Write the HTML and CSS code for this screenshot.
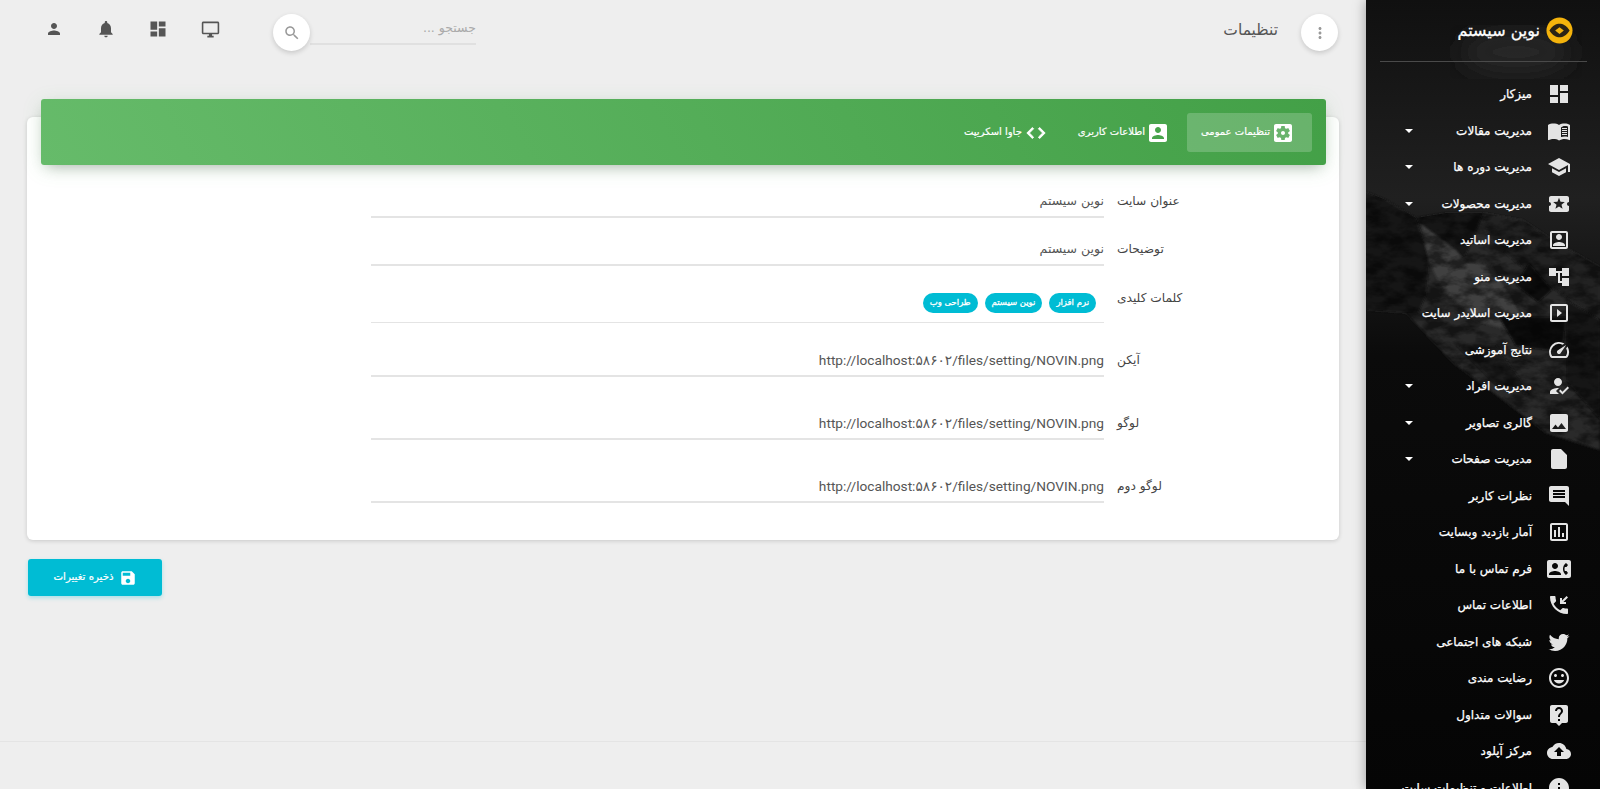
FILE: index.html
```html
<!DOCTYPE html>
<html lang="fa" dir="rtl">
<head>
    <meta charset="UTF-8">
    <meta name="viewport" content="width=device-width, initial-scale=1.0">
    <title>تنظیمات</title>
    <link rel="stylesheet" href="styles.css">
</head>
<body>
    <svg class="sprite" xmlns="http://www.w3.org/2000/svg">
        <symbol id="i-dashboard" viewBox="0 0 24 24"><path d="M3 13h8V3H3v10zm0 8h8v-6H3v6zm10 0h8V11h-8v10zm0-18v6h8V3h-8z"/></symbol>
        <symbol id="i-book" viewBox="0 0 24 24"><path d="M1 6c1.45-1.1 3.55-1.5 5.5-1.5S10.55 4.900 12 6v15.500c-1.450-1.100-3.550-1.500-5.500-1.500-1.450 0-3.400.45-4.750 1.100-.1 0-.15.05-.25.05-.25 0-.5-.25-.5-.5V6z"/><path d="M12 6c1.450-1.100 3.550-1.500 5.500-1.500 1.170 0 2.390.15 3.500.5.750.25 1.400.55 2 1v14.650c0 .25-.25.5-.5.5-.1 0-.15 0-.25-.05-1.400-.750-3.100-1.050-4.750-1.050-1.700 0-4.150.65-5.500 1.500V6zm2 2.500v9.600c1.100-.4 2.400-.6 3.500-.6 1.200 0 2.400.15 3.500.5V7.400c-1.100-.35-2.300-.5-3.500-.5-1.200 0-2.400.6-3.500 1.600z" fill-rule="evenodd"/><path d="M15 9h5v1h-5zM15 11h5v1h-5zM15 13h5v1h-5zM15 15h5v1h-5z"/></symbol>
        <symbol id="i-school" viewBox="0 0 24 24"><path d="M5 13.180v4L12 21l7-3.820v-4L12 17l-7-3.820zM12 3L1 9l11 6 9-4.910V17h2V9L12 3z"/></symbol>
        <symbol id="i-ticket" viewBox="0 0 24 24"><path d="M20 12c0-1.100.9-2 2-2V6c0-1.100-.9-2-2-2H4c-1.100 0-1.990.9-1.990 2v4c1.100 0 1.990.9 1.990 2s-.89 2-2 2v4c0 1.100.9 2 2 2h16c1.100 0 2-.9 2-2v-4c-1.100 0-2-.9-2-2zm-4.420 4.800L12 14.500l-3.580 2.300 1.080-4.120-3.290-2.690 4.240-.25L12 5.800l1.540 3.950 4.240.25-3.290 2.690 1.090 4.110z"/></symbol>
        <symbol id="i-portrait" viewBox="0 0 24 24"><path d="M3 5v14c0 1.100.89 2 2 2h14c1.100 0 2-.9 2-2V5c0-1.100-.9-2-2-2H5c-1.110 0-2 .9-2 2zm16 14H5V5h14v14zM12 12c1.650 0 3-1.350 3-3s-1.350-3-3-3-3 1.350-3 3 1.350 3 3 3zM6 17v1h12v-1c0-2-4-3.100-6-3.100S6 15 6 17z"/></symbol>
        <symbol id="i-tree" viewBox="0 0 24 24"><path d="M22 11V3h-7v3H9V3H2v8h7V8h2v10h4v3h7v-8h-7v3h-2V8h2v3z"/></symbol>
        <symbol id="i-slides" viewBox="0 0 24 24"><path d="M10 8v8l5-4-5-4zm9-5H5c-1.100 0-2 .9-2 2v14c0 1.100.9 2 2 2h14c1.100 0 2-.9 2-2V5c0-1.100-.9-2-2-2zm0 16H5V5h14v14z"/></symbol>
        <symbol id="i-speed" viewBox="0 0 24 24"><path d="M20.380 8.570l-1.230 1.850a8 8 0 0 1-.22 7.580H5.070A8 8 0 0 1 15.580 6.850l1.850-1.230A10 10 0 0 0 3.350 19a2 2 0 0 0 1.720 1h13.850a2 2 0 0 0 1.740-1 10 10 0 0 0-.27-10.440zm-9.790 6.840a2 2 0 0 0 2.830 0l5.660-8.490-8.490 5.660a2 2 0 0 0 0 2.830z"/></symbol>
        <symbol id="i-reg" viewBox="0 0 24 24"><path d="M9 17l3-2.940c-.39-.04-.68-.06-1-.06-2.670 0-8 1.340-8 4v2h9l-3-3zm2-5c2.210 0 4-1.790 4-4s-1.790-4-4-4-4 1.790-4 4 1.790 4 4 4"/><path d="M15.470 20.500L12 17l1.400-1.410 2.070 2.080 5.130-5.170 1.400 1.410z"/></symbol>
        <symbol id="i-image" viewBox="0 0 24 24"><path d="M21 19V5c0-1.100-.9-2-2-2H5c-1.100 0-2 .9-2 2v14c0 1.100.9 2 2 2h14c1.100 0 2-.9 2-2zM8.500 13.500l2.500 3.010L14.500 12l4.500 6H5l3.500-4.500z"/></symbol>
        <symbol id="i-file" viewBox="0 0 24 24"><path d="M6 2c-1.100 0-1.990.9-1.990 2L4 20c0 1.100.89 2 1.990 2H18c1.100 0 2-.9 2-2V8l-6-6H6z"/></symbol>
        <symbol id="i-message" viewBox="0 0 24 24"><path d="M20 2H4c-1.100 0-1.990.9-1.990 2L2 22l4-4h14c1.100 0 2-.9 2-2V4c0-1.100-.9-2-2-2zm-2 12H6v-2h12v2zm0-3H6V9h12v2zm0-3H6V6h12v2z"/></symbol>
        <symbol id="i-chart" viewBox="0 0 24 24"><path d="M9 17H7v-7h2v7zm4 0h-2V7h2v10zm4 0h-2v-4h2v4zm2 2H5V5h14v14zM19 3H5c-1.100 0-2 .9-2 2v14c0 1.100.9 2 2 2h14c1.100 0 2-.9 2-2V5c0-1.100-.9-2-2-2z"/></symbol>
        <symbol id="i-contact" viewBox="0 0 24 24"><path d="M22 3H2C.9 3 0 3.900 0 5v14c0 1.100.9 2 2 2h20c1.100 0 1.990-.9 1.990-2L24 5c0-1.100-.9-2-2-2zM8 6c1.660 0 3 1.340 3 3s-1.340 3-3 3-3-1.340-3-3 1.340-3 3-3zm6 12H2v-1c0-2 4-3.100 6-3.100s6 1.100 6 3.100v1zm3.850-4h1.640L21 16l-1.990 1.990c-1.310-.98-2.280-2.380-2.730-3.990-.18-.64-.28-1.310-.28-2s.1-1.360.28-2c.45-1.620 1.420-3.010 2.730-3.990L21 8l-1.510 2h-1.640c-.22.63-.35 1.300-.35 2s.13 1.370.35 2z"/></symbol>
        <symbol id="i-callback" viewBox="0 0 24 24"><path d="M20 15.500c-1.250 0-2.450-.2-3.570-.57-.35-.11-.74-.03-1.020.24l-2.200 2.200c-2.830-1.440-5.150-3.750-6.590-6.590l2.200-2.210c.28-.26.36-.65.25-1C8.700 6.450 8.500 5.250 8.500 4c0-.55-.45-1-1-1H4c-.55 0-1 .45-1 1 0 9.390 7.610 17 17 17 .55 0 1-.45 1-1v-3.500c0-.55-.45-1-1-1zM21 4.410L19.590 3 15 7.590V5h-2v6h6V9h-2.590z"/></symbol>
        <symbol id="i-twitter" viewBox="0 0 24 24"><path d="M22.460 6c-.77.35-1.600.58-2.460.69.88-.53 1.560-1.370 1.880-2.380-.83.5-1.750.85-2.720 1.050C18.370 4.500 17.260 4 16 4c-2.350 0-4.270 1.920-4.270 4.290 0 .34.04.67.11.98C8.280 9.090 5.110 7.380 3 4.790c-.37.63-.58 1.370-.58 2.150 0 1.490.75 2.810 1.910 3.560-.71 0-1.370-.2-1.950-.5v.03c0 2.080 1.480 3.820 3.440 4.210a4.220 4.220 0 0 1-1.930.07 4.280 4.280 0 0 0 4 2.980 8.521 8.521 0 0 1-5.330 1.840c-.34 0-.68-.02-1.020-.06C3.440 20.290 5.700 21 8.120 21 16 21 20.330 14.460 20.330 8.790c0-.19 0-.37-.01-.56.84-.6 1.560-1.360 2.140-2.230z"/></symbol>
        <symbol id="i-mood" viewBox="0 0 24 24"><path d="M11.990 2C6.470 2 2 6.480 2 12s4.470 10 9.990 10C17.520 22 22 17.520 22 12S17.520 2 11.990 2zM12 20c-4.420 0-8-3.580-8-8s3.580-8 8-8 8 3.580 8 8-3.580 8-8 8zm3.500-9c.83 0 1.500-.67 1.500-1.500S16.330 8 15.500 8 14 8.670 14 9.500s.67 1.500 1.500 1.500zm-7 0c.83 0 1.500-.67 1.500-1.500S9.330 8 8.500 8 7 8.670 7 9.500 7.670 11 8.500 11zm3.500 6.500c2.330 0 4.310-1.460 5.110-3.500H6.890c.8 2.040 2.780 3.500 5.110 3.500z"/></symbol>
        <symbol id="i-help" viewBox="0 0 24 24"><path d="M19 2H5c-1.110 0-2 .9-2 2v14c0 1.100.89 2 2 2h4l3 3 3-3h4c1.100 0 2-.9 2-2V4c0-1.100-.9-2-2-2zm-6 16h-2v-2h2v2zm2.070-7.750l-.9.92C13.450 11.900 13 12.500 13 14h-2v-.5c0-1.100.45-2.100 1.170-2.830l1.240-1.260c.37-.36.59-.86.59-1.410 0-1.100-.9-2-2-2s-2 .9-2 2H8c0-2.210 1.790-4 4-4s4 1.790 4 4c0 .88-.36 1.680-.93 2.250z"/></symbol>
        <symbol id="i-upload" viewBox="0 0 24 24"><path d="M19.350 10.040C18.670 6.590 15.640 4 12 4 9.110 4 6.600 5.640 5.350 8.040 2.340 8.360 0 10.910 0 14c0 3.310 2.690 6 6 6h13c2.760 0 5-2.240 5-5 0-2.640-2.050-4.780-4.650-4.960zM14 13v4h-4v-4H7l5-5 5 5h-3z"/></symbol>
        <symbol id="i-info" viewBox="0 0 24 24"><path d="M12 2C6.480 2 2 6.480 2 12s4.480 10 10 10 10-4.480 10-10S17.520 2 12 2zm1 15h-2v-6h2v6zm0-8h-2V7h2v2z"/></symbol>
        <symbol id="i-person" viewBox="0 0 24 24"><path d="M12 12c2.210 0 4-1.790 4-4s-1.790-4-4-4-4 1.790-4 4 1.790 4 4 4zm0 2c-2.670 0-8 1.340-8 4v2h16v-2c0-2.660-5.330-4-8-4z"/></symbol>
        <symbol id="i-bell" viewBox="0 0 24 24"><path d="M12 22c1.100 0 2-.9 2-2h-4c0 1.100.89 2 2 2zm6-6v-5c0-3.070-1.640-5.640-4.500-6.320V4c0-.83-.67-1.500-1.500-1.500s-1.500.67-1.500 1.500v.68C7.630 5.360 6 7.920 6 11v5l-2 2v1h16v-1l-2-2z"/></symbol>
        <symbol id="i-desktop" viewBox="0 0 24 24"><path d="M21 2H3c-1.100 0-2 .9-2 2v12c0 1.100.9 2 2 2h7v2H8v2h8v-2h-2v-2h7c1.100 0 2-.9 2-2V4c0-1.100-.9-2-2-2zm0 14H3V4h18v12z"/></symbol>
        <symbol id="i-search" viewBox="0 0 24 24"><path d="M15.500 14h-.79l-.28-.27C15.410 12.590 16 11.110 16 9.500 16 5.910 13.090 3 9.500 3S3 5.910 3 9.500 5.910 16 9.500 16c1.610 0 3.090-.59 4.230-1.570l.27.28v.79l5 4.990L20.490 19l-4.990-5zm-6 0C7.010 14 5 11.990 5 9.500S7.010 5 9.500 5 14 7.010 14 9.500 11.990 14 9.500 14z"/></symbol>
        <symbol id="i-more" viewBox="0 0 24 24"><path d="M12 8c1.100 0 2-.9 2-2s-.9-2-2-2-2 .9-2 2 .9 2 2 2zm0 2c-1.100 0-2 .9-2 2s.9 2 2 2 2-.9 2-2-.9-2-2-2zm0 6c-1.100 0-2 .9-2 2s.9 2 2 2 2-.9 2-2-.9-2-2-2z"/></symbol>
        <symbol id="i-settings" viewBox="0 0 24 24"><path d="M12 10c-1.100 0-2 .9-2 2s.9 2 2 2 2-.9 2-2-.9-2-2-2zm7-7H5c-1.110 0-2 .9-2 2v14c0 1.100.89 2 2 2h14c1.110 0 2-.9 2-2V5c0-1.100-.89-2-2-2zm-1.750 9c0 .23-.02.46-.05.68l1.480 1.160c.13.11.17.3.08.45l-1.400 2.420c-.09.15-.27.21-.43.15l-1.740-.7c-.36.28-.76.51-1.180.69l-.26 1.850c-.03.17-.18.3-.35.3h-2.800c-.17 0-.32-.13-.35-.29l-.26-1.850c-.43-.18-.82-.41-1.180-.69l-1.740.7c-.16.06-.34 0-.43-.15l-1.400-2.420c-.09-.15-.05-.34.08-.45l1.480-1.160c-.03-.23-.05-.46-.05-.69 0-.23.02-.46.05-.68l-1.480-1.160c-.13-.11-.17-.3-.08-.45l1.400-2.420c.09-.15.27-.21.43-.15l1.740.7c.36-.28.76-.51 1.180-.69l.26-1.850c.03-.17.18-.3.35-.3h2.800c.17 0 .32.13.35.29l.26 1.850c.43.18.82.41 1.180.69l1.740-.7c.16-.06.34 0 .43.15l1.400 2.420c.09.15.05.34-.08.45l-1.480 1.160c.03.23.05.46.05.69z"/></symbol>
        <symbol id="i-account" viewBox="0 0 24 24"><path d="M3 5v14c0 1.100.89 2 2 2h14c1.100 0 2-.9 2-2V5c0-1.100-.9-2-2-2H5c-1.110 0-2 .9-2 2zm12 4c0 1.660-1.340 3-3 3s-3-1.340-3-3 1.340-3 3-3 3 1.340 3 3zm-9 8c0-2 4-3.100 6-3.100s6 1.100 6 3.100v1H6v-1z"/></symbol>
        <symbol id="i-code" viewBox="0 0 24 24"><path d="M9.400 16.600L4.800 12l4.600-4.600L8 6l-6 6 6 6 1.400-1.400zm5.200 0l4.600-4.600-4.600-4.600L16 6l6 6-6 6-1.400-1.400z"/></symbol>
        <symbol id="i-save" viewBox="0 0 24 24"><path d="M17 3H5c-1.110 0-2 .9-2 2v14c0 1.100.89 2 2 2h14c1.100 0 2-.9 2-2V7l-4-4zm-5 16c-1.660 0-3-1.340-3-3s1.340-3 3-3 3 1.340 3 3-1.340 3-3 3zm3-10H5V5h10v4z"/></symbol>
    </svg>

    <aside class="sidebar">
        <!-- mountain photo behind the menu -->
        <svg class="sidebar-bg" viewBox="0 0 234 789" preserveAspectRatio="none">
            <defs>
                <linearGradient id="sky" x1="0" y1="0" x2="0" y2="1">
                    <stop offset="0" stop-color="#101010"/>
                    <stop offset="0.25" stop-color="#202020"/>
                    <stop offset="0.45" stop-color="#0b0b0b"/>
                    <stop offset="1" stop-color="#050505"/>
                </linearGradient>
                <filter id="soft"><feGaussianBlur stdDeviation="12"/></filter>
                <filter id="rock"><feGaussianBlur stdDeviation="1.200"/></filter>
                <filter id="grain" x="0" y="0" width="100%" height="100%">
                    <feTurbulence type="fractalNoise" baseFrequency="0.05 0.09" numOctaves="4" seed="7"/>
                    <feColorMatrix values="0 0 0 0 0  0 0 0 0 0  0 0 0 0 0  3 0 0 0 -1.100"/>
                    <feComposite in2="SourceGraphic" operator="in"/>
                </filter>
            </defs>
            <rect width="234" height="789" fill="url(#sky)"/>
            <ellipse cx="150" cy="52" rx="55" ry="22" fill="#262626" filter="url(#soft)"/>
            <!-- mountain body, dark rock and snow on top of it -->
            <polygon points="0,192 20,200 50,218 80,213 117,213 157,220 187,240 234,267 234,450 180,433 133,397 87,363 40,313 0,310" fill="#2a2a2a" filter="url(#rock)"/>
            <polygon points="0,192 20,200 50,218 63,258 60,295 52,313 40,313 0,310" fill="#181818" filter="url(#rock)"/>
            <polygon points="50,218 80,213 117,213 100,255 85,260 65,245" fill="#141414" filter="url(#rock)"/>
            <polygon points="117,213 157,220 187,240 234,267 234,320 190,290 150,262 125,240" fill="#222" filter="url(#rock)"/>
            <polygon points="55,224 90,250 100,262 125,265 168,338 115,322 78,292 63,262" fill="#404040" filter="url(#rock)"/>
            <polygon points="163,263 186,290 172,302 150,285" fill="#111" filter="url(#rock)"/>
            <polygon points="133,317 200,317 196,352 150,346" fill="#111" filter="url(#rock)"/>
            <polygon points="200,300 234,320 234,420 200,380" fill="#131313" filter="url(#rock)"/>
            <polygon points="90,345 130,345 165,395 130,385" fill="#1a1a1a" filter="url(#rock)"/>
            <polygon points="0,192 20,200 50,218 80,213 117,213 157,220 187,240 234,267 234,450 180,433 133,397 87,363 40,313 0,310" fill="#000" opacity="0.5" filter="url(#grain)"/>
        </svg>

        <div class="brand">
            <svg class="brand-logo" viewBox="0 0 28 28">
                <circle cx="14" cy="14" r="13.500" fill="#f4b30c"/>
                <path d="M3.500 14C7 8.500 10.500 7 14 7S21 8.500 24.500 14C21 19.500 17.500 21 14 21S7 19.500 3.500 14z" fill="#2b2315"/>
                <path d="M14 10.500l4.500 3.500-4.500 3.500-4.500-3.500z" fill="#f4b30c"/>
            </svg>
            <span>نوین سیستم</span>
        </div>

        <ul class="menu">
            <li><svg class="icon"><use href="#i-dashboard"/></svg><span>میزکار</span></li>
            <li><svg class="icon"><use href="#i-book"/></svg><span>مدیریت مقالات</span><i class="caret"></i></li>
            <li><svg class="icon"><use href="#i-school"/></svg><span>مدیریت دوره ها</span><i class="caret"></i></li>
            <li><svg class="icon"><use href="#i-ticket"/></svg><span>مدیریت محصولات</span><i class="caret"></i></li>
            <li><svg class="icon"><use href="#i-portrait"/></svg><span>مدیریت اساتید</span></li>
            <li><svg class="icon"><use href="#i-tree"/></svg><span>مدیریت منو</span></li>
            <li><svg class="icon"><use href="#i-slides"/></svg><span>مدیریت اسلایدر سایت</span></li>
            <li><svg class="icon"><use href="#i-speed"/></svg><span>نتایج آموزشی</span></li>
            <li><svg class="icon"><use href="#i-reg"/></svg><span>مدیریت افراد</span><i class="caret"></i></li>
            <li><svg class="icon"><use href="#i-image"/></svg><span>گالری تصاویر</span><i class="caret"></i></li>
            <li><svg class="icon"><use href="#i-file"/></svg><span>مدیریت صفحات</span><i class="caret"></i></li>
            <li><svg class="icon flip"><use href="#i-message"/></svg><span>نظرات کاربر</span></li>
            <li><svg class="icon"><use href="#i-chart"/></svg><span>آمار بازدید وبسایت</span></li>
            <li><svg class="icon"><use href="#i-contact"/></svg><span>فرم تماس با ما</span></li>
            <li><svg class="icon"><use href="#i-callback"/></svg><span>اطلاعات تماس</span></li>
            <li><svg class="icon"><use href="#i-twitter"/></svg><span>شبکه های اجتماعی</span></li>
            <li><svg class="icon"><use href="#i-mood"/></svg><span>رضایت مندی</span></li>
            <li><svg class="icon"><use href="#i-help"/></svg><span>سوالات متداول</span></li>
            <li><svg class="icon"><use href="#i-upload"/></svg><span>مرکز آپلود</span></li>
            <li><svg class="icon"><use href="#i-info"/></svg><span>اطلاعات و تنظیمات سایت</span></li>
        </ul>
    </aside>

    <div class="main">
        <header class="topbar">
            <button class="round-btn"><svg><use href="#i-more"/></svg></button>
            <div class="page-title">تنظیمات</div>
            <div class="search">جستجو ...</div>
            <button class="round-btn search-btn"><svg><use href="#i-search"/></svg></button>
            <div class="top-icons">
                <a href="#" class="desktop"><svg><use href="#i-desktop"/></svg></a>
                <a href="#"><svg><use href="#i-dashboard"/></svg></a>
                <a href="#"><svg><use href="#i-bell"/></svg></a>
                <a href="#" class="person"><svg><use href="#i-person"/></svg></a>
            </div>
        </header>

        <section class="card">
            <div class="tabs">
                <a href="#" class="tab active"><svg><use href="#i-settings"/></svg>تنظیمات عمومی</a>
                <a href="#" class="tab"><svg><use href="#i-account"/></svg>اطلاعات کاربری</a>
                <a href="#" class="tab"><svg class="code"><use href="#i-code"/></svg>جاوا اسکریپت</a>
            </div>
            <div class="form">
                <div class="field field-title">
                    <label>عنوان سایت</label>
                    <div class="value">نوین سیستم</div>
                </div>
                <div class="field field-desc">
                    <label>توضیحات</label>
                    <div class="value">نوین سیستم</div>
                </div>
                <div class="field field-tags">
                    <label>کلمات کلیدی</label>
                    <div class="value">
                        <span class="chip">نرم افزار</span>
                        <span class="chip">نوین سیستم</span>
                        <span class="chip">طراحی وب</span>
                    </div>
                </div>
                <div class="field field-file first">
                    <label>آیکن</label>
                    <div class="value url">http://localhost:۵۸۶۰۲/files/setting/NOVIN.png</div>
                </div>
                <div class="field field-file">
                    <label>لوگو</label>
                    <div class="value url">http://localhost:۵۸۶۰۲/files/setting/NOVIN.png</div>
                </div>
                <div class="field field-file">
                    <label>لوگو دوم</label>
                    <div class="value url">http://localhost:۵۸۶۰۲/files/setting/NOVIN.png</div>
                </div>
            </div>
        </section>

        <button class="save-btn"><svg><use href="#i-save"/></svg>ذخیره تغییرات</button>

        <footer class="footer"></footer>
    </div>
</body>
</html>
```

FILE: styles.css
```css
html, body {
    margin: 0;
    padding: 0;
    height: 789px;
    overflow: hidden;
}
body {
    display: flex;
    background-color: #eeeeee;
    color: #333;
    font-family: "DejaVu Sans", sans-serif;
}
.sprite {
    display: none;
}
svg {
    fill: currentColor;
}

/* sidebar */
.sidebar {
    position: relative;
    width: 234px;
    height: 789px;
    flex-shrink: 0;
    overflow: hidden;
    background-color: #0b0b0b;
    color: #fff;
    box-shadow: 0 0 12px rgba(0,0,0,0.35);
    z-index: 2;
}
.sidebar-bg {
    position: absolute;
    top: 0;
    left: 0;
    width: 100%;
    height: 100%;
}
.brand {
    position: relative;
    display: flex;
    align-items: center;
    gap: 6px;
    height: 62px;
    margin: 0 13px 0 14px;
    padding-right: 14px;
    box-sizing: border-box;
    border-bottom: 1px solid #4a4a4a;
    font-size: 16px;
    -webkit-text-stroke: 0.3px #fff;
}
.brand-logo {
    width: 27px;
    height: 27px;
}
.menu {
    position: relative;
    list-style: none;
    margin: 0;
    padding: 13.8px 0 0;
}
.menu li {
    display: flex;
    align-items: center;
    gap: 15px;
    height: 36.5px;
    padding-right: 29px;
    font-size: 12px;
    letter-spacing: -0.2px;
    -webkit-text-stroke: 0.25px #fff;
    white-space: nowrap;
}
.icon {
    width: 24px;
    height: 24px;
    color: #e4e4e4;
    flex-shrink: 0;
}
.flip {
    transform: scaleX(-1);
}
.caret {
    margin-right: auto;
    margin-left: 39px;
    border-top: 4px solid #fff;
    border-left: 4px solid transparent;
    border-right: 4px solid transparent;
}

/* main column */
.main {
    flex: 1;
    display: flex;
    flex-direction: column;
    min-width: 0;
    height: 789px;
}
.topbar {
    display: flex;
    align-items: center;
    height: 65px;
    padding: 0 28px;
}
.round-btn {
    width: 37px;
    height: 37px;
    padding: 0;
    border: none;
    border-radius: 50%;
    background-color: #fff;
    color: #999;
    box-shadow: 0 2px 5px rgba(0,0,0,0.16);
    display: flex;
    align-items: center;
    justify-content: center;
}
.round-btn svg {
    width: 18px;
    height: 18px;
}
.page-title {
    margin-right: 23px;
    margin-top: -5px;
    font-size: 15.5px;
    color: #555;
}
.search {
    margin-right: auto;
    margin-top: -7px;
    width: 166px;
    height: 30px;
    line-height: 30px;
    border-bottom: 2px solid #e0e0e0;
    font-size: 12.5px;
    color: #aaa;
}
.search-btn {
    margin-left: 37px;
}
.top-icons {
    display: flex;
}
.top-icons a {
    display: flex;
    align-items: center;
    justify-content: center;
    width: 52px;
    height: 24px;
    color: #555;
    margin-top: -7px;
}
.top-icons svg {
    width: 20px;
    height: 20px;
}
.top-icons .desktop svg {
    width: 19px;
    height: 19px;
}
.top-icons .person svg {
    width: 18px;
    height: 18px;
}

/* card */
.card {
    margin: 52px 27px 0;
    background-color: #fff;
    border-radius: 6px;
    box-shadow: 0 1px 4px rgba(0,0,0,0.16);
    height: 423px;
}
.tabs {
    display: flex;
    height: 66px;
    box-sizing: border-box;
    margin: -18px 13px 0 14px;
    padding: 14px 14px 13px;
    border-radius: 3px;
    background: linear-gradient(60deg, #66bb6a, #43a047);
    box-shadow: 0 6px 14px -6px rgba(0,0,0,0.3), 0 4px 20px rgba(76,175,80,0.15);
}
.tab {
    display: flex;
    align-items: center;
    gap: 1px;
    padding: 0 17px 3px 14px;
    border-radius: 3px;
    color: #fff;
    font-size: 10px;
    -webkit-text-stroke: 0.2px #fff;
    text-decoration: none;
    white-space: nowrap;
}
.tab svg {
    width: 24px;
    height: 24px;
    margin-top: 3px;
}
.tab svg.code {
    width: 22px;
    height: 22px;
    stroke: currentColor;
    stroke-width: 1;
    margin-left: 2px;
}
.tab.active {
    background-color: rgba(255,255,255,0.2);
}

/* form rows */
.field {
    display: flex;
    align-items: flex-end;
}
.field label {
    width: 235px;
    box-sizing: border-box;
    flex-shrink: 0;
    padding: 0 0 8px 13px;
    text-align: left;
    font-size: 12.2px;
    color: #444;
    line-height: 18px;
}
.value {
    width: 733px;
    box-sizing: border-box;
    border-bottom: 2px solid #e4e4e4;
    font-size: 12.5px;
    line-height: 20px;
    padding-bottom: 5px;
    color: #555;
}
.field-title {
    height: 53px;
}
.field-desc {
    height: 48px;
}
.field-tags {
    height: 57px;
}
.field-tags label {
    padding-bottom: 16px;
}
.field-tags .value {
    display: flex;
    gap: 7px;
    border-bottom-width: 1px;
    padding: 0 8px 9px 0;
}
.field-file {
    height: 63px;
}
.field-file.first {
    height: 54px;
}
.field-file label {
    padding-bottom: 8px;
}
.url {
    font-family: Roboto, "DejaVu Sans", sans-serif;
    font-size: 13.7px;
    direction: ltr;
    text-align: right;
}
.chip {
    height: 20px;
    line-height: 18px;
    padding: 0 7px;
    border-radius: 10px;
    background-color: #00bcd4;
    color: #fff;
    font-size: 8.5px;
    letter-spacing: -0.1px;
    -webkit-text-stroke: 0.3px #fff;
}

/* save button */
.save-btn {
    align-self: flex-end;
    display: flex;
    align-items: center;
    justify-content: center;
    gap: 5px;
    width: 134px;
    height: 37px;
    margin: 19px 0 0 28px;
    padding: 0 0 3px;
    border: none;
    border-radius: 3px;
    background-color: #00bcd4;
    color: #fff;
    font-family: inherit;
    font-size: 10.2px;
    -webkit-text-stroke: 0.2px #fff;
    box-shadow: 0 2px 4px rgba(0,188,212,0.3);
}
.save-btn svg {
    width: 18px;
    height: 18px;
    margin-top: 3px;
}
.footer {
    margin-top: 145px;
    flex: 1;
    border-top: 1px solid #e4e4e4;
}
```
